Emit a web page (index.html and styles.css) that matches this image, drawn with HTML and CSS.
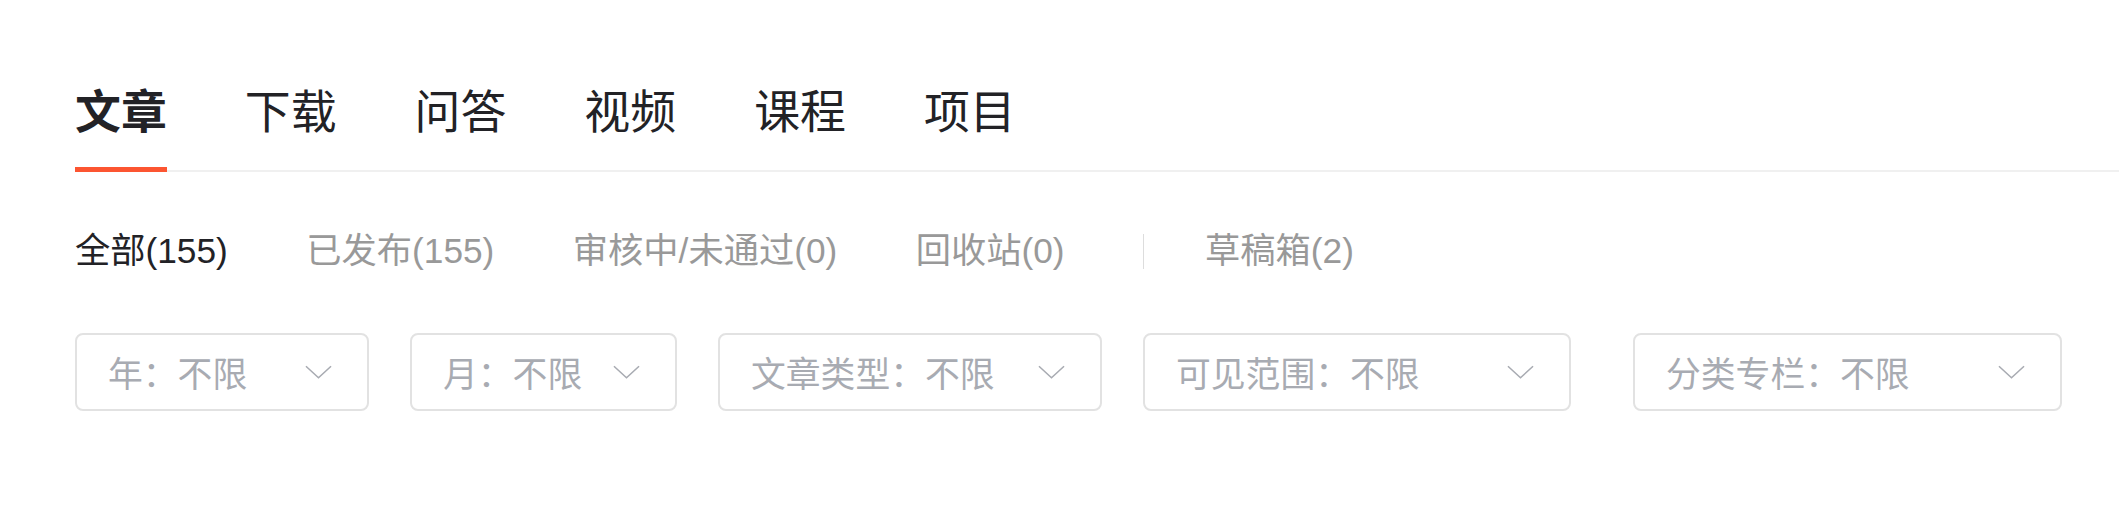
FILE: index.html
```html
<!DOCTYPE html>
<html lang="zh-CN">
<head>
<meta charset="utf-8">
<title>内容管理</title>
<link rel="stylesheet" href="styles.css">
</head>
<body>
<div class="page">
  <nav class="tabs">
    <div class="tab tab--active">文章</div>
    <div class="tab">下载</div>
    <div class="tab">问答</div>
    <div class="tab">视频</div>
    <div class="tab">课程</div>
    <div class="tab">项目</div>
  </nav>
  <div class="subtabs">
    <span class="subtab subtab--active">全部(155)</span>
    <span class="subtab">已发布(155)</span>
    <span class="subtab">审核中/未通过(0)</span>
    <span class="subtab">回收站(0)</span>
    <span class="divider"></span>
    <span class="subtab">草稿箱(2)</span>
  </div>
  <div class="filters">
    <div class="filter filter--year"><span>年：不限</span><svg class="chev" viewBox="0 0 28 14"><path d="M1 1 L14 13 L27 1"/></svg></div>
    <div class="filter filter--month"><span>月：不限</span><svg class="chev" viewBox="0 0 28 14"><path d="M1 1 L14 13 L27 1"/></svg></div>
    <div class="filter filter--type"><span>文章类型：不限</span><svg class="chev" viewBox="0 0 28 14"><path d="M1 1 L14 13 L27 1"/></svg></div>
    <div class="filter filter--scope"><span>可见范围：不限</span><svg class="chev" viewBox="0 0 28 14"><path d="M1 1 L14 13 L27 1"/></svg></div>
    <div class="filter filter--column"><span>分类专栏：不限</span><svg class="chev" viewBox="0 0 28 14"><path d="M1 1 L14 13 L27 1"/></svg></div>
  </div>
</div>
</body>
</html>
```

FILE: styles.css
```css
html, body {
  margin: 0;
  background: #ffffff;
}
body {
  font-family: "Liberation Sans", "Noto Sans CJK SC", sans-serif;
}
.page {
  padding: 82px 0 0 75px;
}
.tabs {
  display: flex;
  gap: 78px;
  border-bottom: 2px solid #f0f0f0;
}
.tab {
  position: relative;
  font-size: 45.9px;
  line-height: 60px;
  padding-bottom: 28px;
  color: #222226;
}
.tab--active {
  font-weight: 700;
}
.tab--active::after {
  content: "";
  position: absolute;
  left: 0;
  right: 0;
  bottom: -2px;
  height: 5px;
  background: #fc5531;
}
.subtabs {
  display: flex;
  align-items: center;
  margin-top: 59px;
  font-size: 35.25px;
  line-height: 40px;
}
.subtab {
  margin-right: 78.5px;
  color: #999999;
}
.subtab--active {
  color: #222226;
}
.divider {
  width: 1px;
  height: 35px;
  background: #dddddd;
  margin-right: 61px;
}
.filters {
  display: flex;
  margin-top: 62px;
}
.filter {
  box-sizing: border-box;
  height: 78px;
  border: 2px solid #e2e2e2;
  border-radius: 8px;
  display: flex;
  align-items: center;
  justify-content: space-between;
  padding: 0 35px 0 31px;
  margin-right: 41px;
  font-size: 34.8px;
  color: #a8abb2;
}
.filter--year { width: 294px; }
.filter--month { width: 267px; }
.filter--type { width: 384px; }
.filter--scope { width: 428px; margin-right: 62px; }
.filter--column { width: 429px; }
.chev {
  width: 27px;
  height: 14px;
  fill: none;
  stroke: #a8abb2;
  stroke-width: 1.6;
}
```
